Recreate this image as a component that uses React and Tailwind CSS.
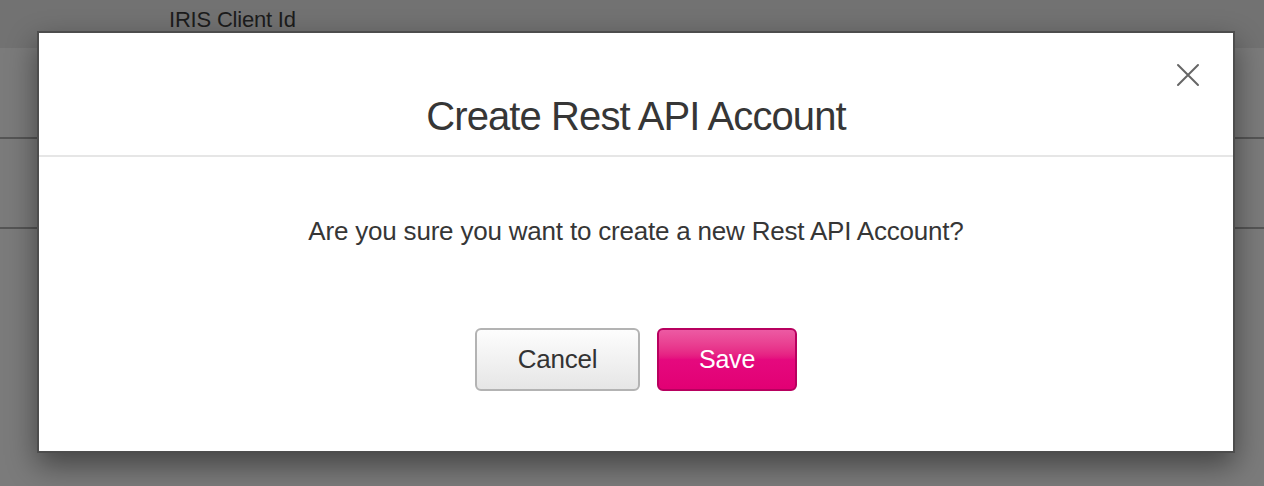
import { useState } from 'react';

const font = { fontFamily: '"Liberation Sans", Arial, sans-serif' };

const CloseIcon = () => (
  <svg width="24" height="24" viewBox="0 0 24 24" fill="none" stroke="#666" strokeWidth="2" strokeLinecap="round">
    <path d="M2 2 L22 22 M22 2 L2 22" />
  </svg>
);

export default function App() {
  const [open, setOpen] = useState(true);

  return (
    <div className="relative w-[1264px] h-[486px] overflow-hidden bg-[#7b7b7b]" style={font}>
      {/* page behind the overlay */}
      <div className="h-[48px] bg-[#727272] pl-[169px] pt-[6px] text-[22px] leading-[28px] text-[#1c1c1c] tracking-[-0.2px]">
        IRIS Client Id
      </div>
      <div className="h-[91px] border-b-2 border-[#555]"></div>
      <div className="h-[90px] border-b-2 border-[#555]"></div>

      {/* Modal */}
      {open && (
        <div className="absolute left-[37px] top-[31px] w-[1198px] h-[422px] bg-white border-2 border-[#4d4d4d] shadow-[0_12px_28px_rgba(0,0,0,0.45)] flex flex-col">
          <button onClick={() => setOpen(false)} className="absolute right-[33px] top-[30px]">
            <CloseIcon />
          </button>
          <div className="pt-[59px] pb-[15px] border-b-2 border-[#e6e6e6] text-center">
            <h2 className="text-[40px] leading-[48px] text-[#363636] tracking-[-0.9px]">Create Rest API Account</h2>
          </div>
          <div className="pt-[58px] text-center">
            <p className="text-[26px] leading-[32px] text-[#363636] tracking-[-0.2px]">
              Are you sure you want to create a new Rest API Account?
            </p>
          </div>
          <div className="mt-[81px] flex justify-center gap-[17px]">
            <button className="w-[165px] h-[63px] rounded-[6px] border-2 border-[#b3b3b3] bg-linear-to-b from-[#fdfdfd] to-[#e6e6e6] text-[26px] text-[#333] tracking-[-0.2px]">
              Cancel
            </button>
            <button className="w-[140px] h-[63px] rounded-[6px] border-2 border-[#b8005f] bg-linear-to-b from-[#ec5aa3] via-[#e5097e] to-[#e20074] text-[25px] text-white tracking-[-0.2px]">
              Save
            </button>
          </div>
        </div>
      )}
    </div>
  );
}
